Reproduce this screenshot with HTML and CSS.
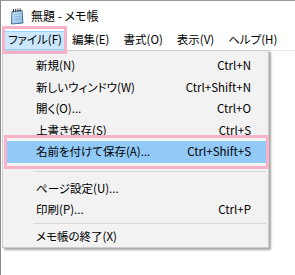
FILE: index.html
```html
<!DOCTYPE html>
<html lang="ja">
<head>
<meta charset="utf-8">
<link rel="stylesheet" href="styles.css">
</head>
<body>
<div class="window">
  <div class="titlebar">
    <svg class="app-icon" width="14" height="17" viewBox="0 0 14 17">
      <defs>
        <linearGradient id="pg" x1="0" y1="0" x2="1" y2="1">
          <stop offset="0" stop-color="#dceffb"/>
          <stop offset="1" stop-color="#86bde6"/>
        </linearGradient>
      </defs>
      <path d="M2 3.5 L12 2.5 L13 15 L1.5 16 Z" fill="url(#pg)" stroke="#3d6f9b" stroke-width="1"/>
      <path d="M3.6 6.5 L11.2 5.8 M3.7 9 L11.5 8.3 M3.8 11.5 L11.8 10.8" stroke="#7ba8cf" stroke-width="0.8"/>
      <rect x="3" y="1" width="1" height="3.5" fill="#3a3a3a"/>
      <rect x="5.2" y="0.8" width="1" height="3.5" fill="#3a3a3a"/>
      <rect x="7.4" y="0.6" width="1" height="3.5" fill="#3a3a3a"/>
      <rect x="9.6" y="0.4" width="1" height="3.5" fill="#3a3a3a"/>
    </svg>
    <span class="title">無題 - メモ帳</span>
  </div>
  <div class="menubar">
    <span class="mb-item active">ファイル(F)</span>
    <span class="mb-item">編集(E)</span>
    <span class="mb-item">書式(O)</span>
    <span class="mb-item">表示(V)</span>
    <span class="mb-item">ヘルプ(H)</span>
  </div>
  <div class="content"></div>

  <div class="dropdown">
    <div class="mi"><span>新規(N)</span><span class="sc">Ctrl+N</span></div>
    <div class="mi"><span>新しいウィンドウ(W)</span><span class="sc">Ctrl+Shift+N</span></div>
    <div class="mi"><span>開く(O)...</span><span class="sc">Ctrl+O</span></div>
    <div class="mi"><span>上書き保存(S)</span><span class="sc">Ctrl+S</span></div>
    <div class="mi sel"><span>名前を付けて保存(A)...</span><span class="sc">Ctrl+Shift+S</span></div>
    <div class="sep sep-wide"></div>
    <div class="mi"><span>ページ設定(U)...</span><span class="sc"></span></div>
    <div class="mi"><span>印刷(P)...</span><span class="sc">Ctrl+P</span></div>
    <div class="sep sep-narrow"></div>
    <div class="mi"><span>メモ帳の終了(X)</span><span class="sc"></span></div>
  </div>

  <div class="mark mark-file"></div>
  <div class="mark mark-save"></div>
</div>
</body>
</html>
```

FILE: styles.css
```css
html, body {
  margin: 0;
  padding: 0;
  background: #ffffff;
}

body {
  width: 295px;
  height: 275px;
  overflow: hidden;
  font-family: "Noto Sans CJK JP", "Noto Sans", sans-serif;
  font-size: 11.5px;
  color: #000;
  font-feature-settings: "palt" 1;
}

.window {
  position: relative;
  width: 295px;
  height: 275px;
  box-sizing: border-box;
  border-left: 1px solid #8a8a8a;
  border-top: 1px solid #9a9a9a;
  background: #fff;
}

.titlebar {
  height: 29px;
  display: flex;
  align-items: center;
  padding-left: 9px;
  gap: 7px;
}

.app-icon {
  display: block;
  margin-top: 1px;
}

.title {
  font-size: 12px;
  line-height: 1;
}

.menubar {
  height: 20px;
  display: flex;
  align-items: center;
  padding-left: 3px;
  border-bottom: 1px solid #ececec;
}

.mb-item {
  height: 19px;
  display: flex;
  align-items: center;
  padding: 0 7px;
  box-sizing: border-box;
  line-height: 1;
}

.mb-item.active {
  background: #cce8ff;
  border: 1px solid #99d1ff;
  padding: 0 2px 0 3px;
  margin-right: 0;
}

.content {
  height: 200px;
}

.dropdown {
  position: absolute;
  left: 1px;
  top: 49px;
  width: 267px;
  box-sizing: border-box;
  background: #f2f2f2;
  border: 1px solid #cccccc;
  box-shadow: 2px 2px 2px rgba(0, 0, 0, 0.35);
  padding: 4px 0 0;
}

.mi {
  height: 21.5px;
  margin: 0 2px;
  display: flex;
  align-items: center;
  justify-content: space-between;
  padding: 0 15px 0 31px;
  line-height: 1;
}

.mi.sel {
  background: #91c9f7;
}

.sep {
  height: 1px;
  background: #d7d7d7;
  margin: 0 2px 0 30px;
}

.sep-wide {
  margin-top: 8px;
  margin-bottom: 6px;
}

.sep-narrow {
  margin-top: 2px;
  margin-bottom: 2px;
}

.mark {
  position: absolute;
  border: 3px solid #f5b2c8;
  box-sizing: border-box;
  pointer-events: none;
}

.mark-file {
  left: 1px;
  top: 25px;
  width: 65px;
  height: 28px;
}

.mark-save {
  left: 3px;
  top: 134px;
  width: 265px;
  height: 34px;
}
```
